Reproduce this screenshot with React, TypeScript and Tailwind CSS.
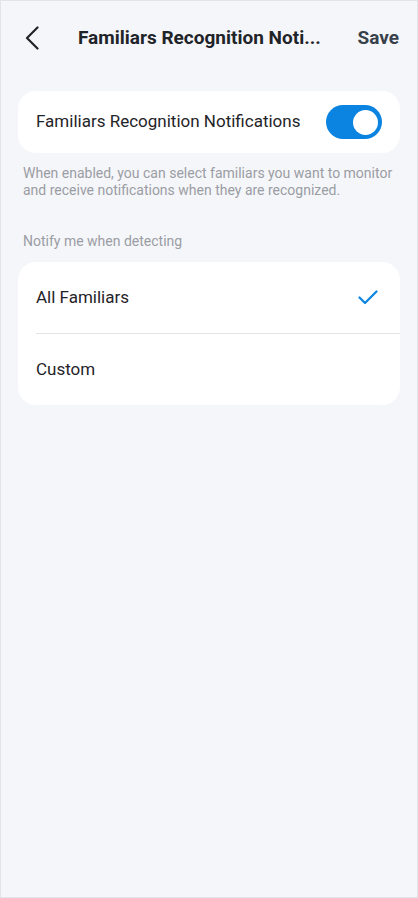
import { useState } from "react";

const font = { fontFamily: "Roboto, 'Noto Sans', sans-serif" };

function BackIcon() {
  return (
    <svg width="14" height="24" viewBox="0 0 14 24" fill="none" aria-hidden="true">
      <path d="M12.5 1.5 2 12l10.5 10.5" stroke="#1f2428" strokeWidth="2.2" strokeLinecap="round" strokeLinejoin="round" />
    </svg>
  );
}

function CheckIcon() {
  return (
    <svg width="20" height="15" viewBox="0 0 20 15" fill="none" aria-hidden="true">
      <path d="M1.5 7.5 7 13 18.5 1.5" stroke="#0a84e0" strokeWidth="2.2" strokeLinecap="round" strokeLinejoin="round" />
    </svg>
  );
}

export default function App() {
  const [enabled, setEnabled] = useState(true);
  const [choice, setChoice] = useState<"all" | "custom">("all");

  return (
    <div className="min-h-[898px] w-full border border-[#e3e4e8] bg-[#f5f6fa]" style={font}>
      <header className="flex h-[74px] items-center pl-[24px] pr-[18px]">
        <button className="flex h-[24px] w-[14px] shrink-0 items-center">
          <BackIcon />
        </button>
        <h1 className="ml-[39px] whitespace-nowrap text-[19px] font-bold text-[#1f2428]">
          Familiars Recognition Noti...
        </h1>
        <button className="ml-auto shrink-0 text-[19px] font-bold text-[#38414a]">Save</button>
      </header>

      <div className="mt-[16px] px-[17px]">
        <div className="flex h-[62px] items-center justify-between rounded-[18px] bg-white pl-[18px] pr-[18px]">
          <span className="text-[17px] text-[#1f2428]">Familiars Recognition Notifications</span>
          <button
            onClick={() => setEnabled(!enabled)}
            className={`flex h-[34px] w-[56px] items-center rounded-full px-[4px] ${enabled ? "justify-end bg-[#0a84e0]" : "justify-start bg-[#d5d8de]"}`}
          >
            <span className="h-[25px] w-[25px] rounded-full bg-white" />
          </button>
        </div>

        <p className="mt-[12px] px-[5px] text-[14px] leading-[17px] text-[#9a9da3]">
          When enabled, you can select familiars you want to monitor and receive notifications when they are recognized.
        </p>

        <p className="mt-[32px] px-[5px] text-[14px] text-[#9a9da3]">Notify me when detecting</p>

        <div className="mt-[10px] rounded-[18px] bg-white">
          <button
            onClick={() => setChoice("all")}
            className="flex h-[71px] w-full items-center justify-between pl-[18px] pr-[22px] text-left"
          >
            <span className="text-[17px] text-[#1f2428]">All Familiars</span>
            {choice === "all" && <CheckIcon />}
          </button>
          <div className="ml-[18px] h-px bg-[#e3e4e8]" />
          <button
            onClick={() => setChoice("custom")}
            className="flex h-[71px] w-full items-center justify-between pl-[18px] pr-[22px] text-left"
          >
            <span className="text-[17px] text-[#1f2428]">Custom</span>
            {choice === "custom" && <CheckIcon />}
          </button>
        </div>
      </div>
    </div>
  );
}
